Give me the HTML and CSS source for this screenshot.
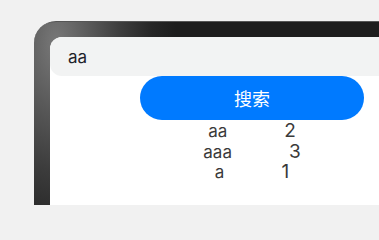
FILE: index.html
```html
<!DOCTYPE html>
<html lang="zh">
<head>
<meta charset="utf-8">
<title>搜索</title>
<link rel="stylesheet" href="styles.css">
</head>
<body>
<div class="frame">
  <div class="screen">
    <div class="search">aa</div>
    <div class="panel">
      <div class="btn">搜索</div>
      <div class="list">
        <div class="row"><span class="name">aa</span><span class="count">2</span></div>
        <div class="row"><span class="name">aaa</span><span class="count">3</span></div>
        <div class="row"><span class="name">a</span><span class="count">1</span></div>
      </div>
    </div>
  </div>
</div>
</body>
</html>
```
FILE: styles.css
```css
html, body {
  margin: 0;
  padding: 0;
  overflow: hidden;
}
body {
  background: #f1f1f1;
  width: 379px;
  height: 205px;
  font-family: Inter, "Noto Sans CJK SC", sans-serif;
}
.frame {
  margin: 21px 0 0 34px;
  width: 345px;
  height: 184px;
  box-sizing: border-box;
  padding: 15px 0 0 16px;
  border-radius: 22px 0 0 0;
  background: radial-gradient(ellipse 120px 230px at 22px 22px, #787878 0%, #3c3c3c 55%, #262626 80%, #1d1d1d 100%);
  border-top: 1px solid #555;
}
.screen {
  background: #fff;
  border-radius: 12px 0 0 0;
  height: 100%;
}
.search {
  height: 39px;
  box-sizing: border-box;
  background: #f2f3f3;
  border-radius: 12px 0 0 12px;
  padding-left: 18px;
  display: flex;
  align-items: center;
  font-size: 17px;
  color: #1e222a;
}
.panel {
  width: 224px;
  margin-left: 90px;
}
.btn {
  height: 44px;
  border-radius: 22px;
  background: #007aff;
  color: #fff;
  display: flex;
  align-items: center;
  justify-content: center;
  font-size: 18px;
}
.list {
  color: #3a3a3a;
  padding-top: 1px;
}
.row {
  display: flex;
  justify-content: center;
  gap: 57px;
  line-height: 20.5px;
  font-size: 17px;
}
.count {
  font-size: 19px;
}
```
